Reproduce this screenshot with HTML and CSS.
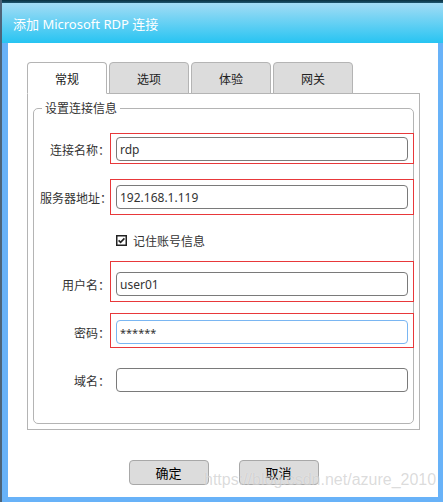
FILE: index.html
```html
<!DOCTYPE html>
<html lang="zh-CN">
<head>
<meta charset="utf-8">
<title>添加 Microsoft RDP 连接</title>
<link rel="stylesheet" href="styles.css">
</head>
<body>
<div class="titlebar">添加 Microsoft RDP 连接</div>
<div class="frame">
  <div class="dialog">
    <div class="tabs">
      <div class="tab active">常规</div>
      <div class="tab">选项</div>
      <div class="tab">体验</div>
      <div class="tab">网关</div>
    </div>
    <div class="panel">
      <fieldset class="group">
        <legend>设置连接信息</legend>
        <div class="row">
          <span class="label">连接名称：</span>
          <div class="field"><div class="input">rdp</div><span class="mark m1"></span></div>
        </div>
        <div class="row">
          <span class="label">服务器地址：</span>
          <div class="field"><div class="input">192.168.1.119</div><span class="mark m2"></span></div>
        </div>
        <div class="check-row">
          <svg class="checkbox" width="11" height="11" viewBox="0 0 11 11"><rect x="0.75" y="0.75" width="9.5" height="9.5" fill="#fff" stroke="#222" stroke-width="1.5"/><path d="M2.6 5.4 L4.6 7.4 L8.4 3.4" fill="none" stroke="#222" stroke-width="1.6"/></svg>
          <span class="check-label">记住账号信息</span>
        </div>
        <div class="row">
          <span class="label">用户名：</span>
          <div class="field"><div class="input">user01</div><span class="mark m3"></span></div>
        </div>
        <div class="row">
          <span class="label">密码：</span>
          <div class="field"><div class="input focus">******</div><span class="mark m4"></span></div>
        </div>
        <div class="row">
          <span class="label">域名：</span>
          <div class="field"><div class="input"></div></div>
        </div>
      </fieldset>
    </div>
    <div class="buttons">
      <button class="btn">确定</button>
      <button class="btn">取消</button>
    </div>
  </div>
</div>
<div class="watermark">https://blog.csdn.net/azure_2010</div>
</body>
</html>
```

FILE: styles.css
```css
* { box-sizing: border-box; }
html, body { margin: 0; padding: 0; }
body {
  width: 443px;
  height: 502px;
  overflow: hidden;
  background: #68b2f8;
  border-left: 2px solid #4d6479;
  font-family: "Noto Sans CJK SC", "Noto Sans", sans-serif;
  font-size: 12px;
  color: #333;
  position: relative;
}
.titlebar {
  height: 43px;
  padding: 3px 0 0 11px;
  display: flex;
  align-items: center;
  color: #fff;
  font-family: "Noto Sans", "Noto Sans CJK SC", sans-serif;
  font-size: 13px;
  background: linear-gradient(#08303f 0, #1d5670 3px, #a3dcf5 3px, #27c4f2 43px);
}
.frame {
  padding: 0 5px 5px 6px;
}
.dialog {
  background: #fff;
  height: 454px;
  padding: 19px 18px 12px 19px;
  display: flex;
  flex-direction: column;
}
.tabs {
  display: flex;
  gap: 2px;
  height: 32px;
  margin-bottom: -1px;
  position: relative;
  z-index: 1;
}
.tab {
  width: 80px;
  border: 1px solid #b4b4b4;
  border-radius: 4px 4px 0 0;
  background: #dcdcdc;
  display: flex;
  align-items: center;
  justify-content: center;
  color: #222;
  font-size: 12px;
}
.tab.active {
  background: #fff;
  border-bottom-color: #fff;
}
.panel {
  height: 337px;
  border: 1px solid #b4b4b4;
  padding: 6px 5px 5px 5px;
}
.group {
  margin: 0;
  border: 1px solid #b4b4b4;
  border-radius: 5px;
  padding: 21px 4px 31px 6px;
  display: flex;
  flex-direction: column;
  gap: 24px;
  min-width: 0;
}
.group legend {
  padding: 0 3px;
  margin-left: 2px;
  line-height: 16px;
  font-size: 12px;
  color: #333;
}
.row {
  display: flex;
  align-items: center;
  height: 24px;
}
.label {
  width: 70px;
  text-align: right;
  white-space: nowrap;
  color: #333;
}
.field {
  position: relative;
  margin-left: 6px;
  width: 292px;
  height: 24px;
}
.input {
  height: 24px;
  border: 1px solid #7a7a7a;
  border-radius: 4px;
  padding: 0 3px;
  display: flex;
  align-items: center;
  font-family: "Noto Sans", sans-serif;
  font-size: 12px;
  color: #333;
}
.input.focus {
  border-color: #7ab6f2;
  font-size: 11px;
}
.mark {
  position: absolute;
  left: -6px;
  right: -6px;
  border: 1px solid #e8383a;
  pointer-events: none;
}
.m1 { top: -4px; bottom: -3px; }
.m2 { top: -6px; bottom: -6px; }
.m3 { top: -11px; bottom: -6px; }
.m4 { top: -7px; bottom: -4px; }
.check-row {
  height: 15px;
  display: flex;
  align-items: center;
  padding-left: 76px;
  gap: 6px;
}
.checkbox { display: block; }
.check-label { color: #333; }
.buttons {
  margin-top: 30px;
  display: flex;
  justify-content: center;
  gap: 30px;
}
.btn {
  width: 80px;
  height: 25px;
  border: 1px solid #a8a8a8;
  border-radius: 4px;
  background: #dcdcdc;
  font-family: "Noto Sans CJK SC", sans-serif;
  font-size: 13px;
  color: #000;
  padding: 0;
}
.watermark {
  position: absolute;
  left: 202px;
  top: 471px;
  font-family: "Liberation Sans", Arial, sans-serif;
  font-size: 16px;
  color: rgba(175, 175, 175, 0.45);
  text-shadow: 0 0 1px rgba(255, 255, 255, 0.7);
  white-space: nowrap;
}
```
